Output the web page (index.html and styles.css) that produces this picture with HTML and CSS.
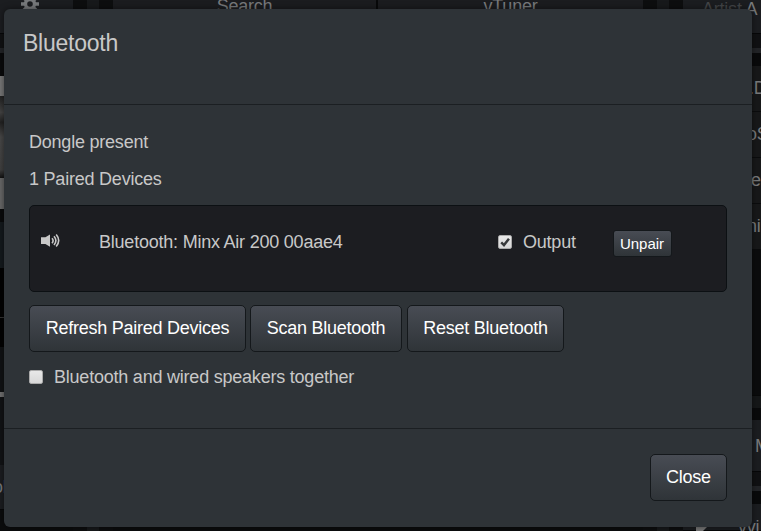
FILE: index.html
```
<!DOCTYPE html>
<html lang="en">

<head>
    <meta charset="UTF-8">
    <meta name="viewport" content="width=device-width, initial-scale=1.0">
    <title>Bluetooth</title>
    <link rel="stylesheet" href="styles.css">
</head>

<body>
    <div class="page">
        <div class="col side">
            <div class="card settings">
                <svg class="gear" viewBox="0 0 18 18">
                    <circle cx="9" cy="9" r="4.5" fill="none" stroke="#77797b" stroke-width="3.4"/>
                    <path d="M9 0v4M9 14v4M0 9h4M14 9h4M2.6 2.6l2.8 2.8M12.6 12.6l2.8 2.8M2.6 15.4l2.8-2.8M12.6 5.4l2.8-2.8" stroke="#77797b" stroke-width="3.4"/>
                </svg>
            </div>
            <div class="edge"></div>
            <div class="space"></div>
            <div class="art-top"></div>
            <div class="art"></div>
            <div class="art-bottom"></div>
            <div class="space"></div>
            <div class="panel"></div>
            <div class="empty"></div>
            <div class="lines"></div>
            <div class="slider"></div>
            <div class="lower"></div>
            <div class="card label">ol</div>
        </div>
        <div class="gutter"></div>
        <div class="col main">
            <div class="tabs">
                <div class="tab">Search</div>
                <div class="tab">vTuner</div>
            </div>
            <div class="fill"></div>
        </div>
        <div class="gutter"></div>
        <div class="col queue">
            <div class="card artist"><span>Artist</span> A</div>
            <div class="edge"></div>
            <div class="space"></div>
            <ul class="list">
                <li>.D</li>
                <li>oS</li>
                <li>e</li>
                <li>ni</li>
            </ul>
            <div class="fill"></div>
            <div class="row-end"></div>
            <div class="card track">M</div>
            <div class="edge"></div>
            <div class="space"></div>
            <div class="card last"><i></i>vvi</div>
        </div>
    </div>

    <div class="modal">
        <div class="modal-header">
            <h3>Bluetooth</h3>
        </div>
        <div class="modal-body">
            <p>Dongle present</p>
            <p>1 Paired Devices</p>
            <div class="well">
                <svg class="speaker" viewBox="0 0 19 14">
                    <path d="M0 3.2h4.4L9 0.4v12.4L4.4 10H0z" fill="#c8c8c8"/>
                    <path d="M11 4.2q2.2 2.5 0 5M13 2.2q3.8 4.4 0 8.8M15.2 0.6q5 6 0 12" fill="none" stroke="#c8c8c8" stroke-width="1.6"/>
                </svg>
                <span class="device">Bluetooth: Minx Air 200 00aae4</span>
                <label class="output">
                    <span class="check">
                        <svg viewBox="0 0 14 14"><path d="M2.6 7.4l3.2 3.2L11.6 3.2" fill="none" stroke="#37393b" stroke-width="2.8"/></svg>
                    </span>
                    Output
                </label>
                <button class="btn btn-small">Unpair</button>
            </div>
            <div class="buttons">
                <button class="btn refresh">Refresh Paired Devices</button>
                <button class="btn scan">Scan Bluetooth</button>
                <button class="btn reset">Reset Bluetooth</button>
            </div>
            <label class="together"><span class="check"></span>Bluetooth and wired speakers together</label>
        </div>
        <div class="modal-footer">
            <button class="btn close">Close</button>
        </div>
    </div>
</body>

</html>
```
FILE: styles.css
```
* {
    box-sizing: border-box;
}

body,
h3,
p,
ul,
li {
    margin: 0;
    padding: 0;
    list-style: none;
}

body {
    height: 531px;
    overflow: hidden;
    background: #0b0c0d;
    color: #c8c8c8;
    font-family: "Liberation Sans", Arial, sans-serif;
    font-size: 18px;
    line-height: 25px;
    letter-spacing: -0.22px;
}

/* page behind the dialog */
.page {
    display: flex;
    height: 531px;
    color: #77797b;
}

.col {
    display: flex;
    flex-direction: column;
    overflow: hidden;
}

.col > * {
    flex: none;
}

.side {
    width: 73px;
}

.main {
    width: 530px;
}

.queue {
    width: 78px;
}

.gutter {
    width: 40px;
    border: solid #0d0e0f;
    border-width: 0 14px;
    background: #17191b;
}

.card {
    height: 34px;
    background: #1b1d20;
    border-bottom: 1px solid #060708;
}

.gear {
    display: block;
    width: 18px;
    height: 18px;
    margin: -5px 0 0 21px;
}

.edge {
    height: 19px;
    background: #222427;
    border-top: 14px solid #101113;
}

.space {
    height: 13px;
    background: #090a0b;
}

.settings + .edge + .space {
    height: 23px;
}

.art-top {
    height: 20px;
    background: #777;
}

.art {
    height: 82px;
    background: linear-gradient(#222, #444 20%, #222 32%, #484848 50%, #404040 90%, #111);
}

.art-bottom {
    height: 31px;
    background: #686868;
}

.panel {
    height: 46px;
    background: #14191d;
}

.empty {
    height: 50px;
    background: #020202;
    border-bottom: 1px solid #333;
}

.lines {
    height: 74px;
    background: #020202;
    border-bottom: 45px solid #101214;
}

.slider {
    height: 5px;
    background: #707070;
}

.lower {
    height: 68px;
    background: #111315;
}

.label {
    height: 45px;
    line-height: 44px;
    text-indent: -7px;
}

.tabs {
    display: flex;
    height: 34px;
    background: #1b1c1f;
}

.tab {
    width: 266px;
    border-right: 2px solid #08090a;
    line-height: 12px;
    text-align: center;
}

.tab + .tab {
    border-right: 0;
}

.fill {
    flex: 1;
    background: #0b0c0d;
}

.artist {
    padding-left: 19px;
    line-height: 18px;
    white-space: nowrap;
}

.artist span {
    color: #424446;
}

.list li {
    height: 46px;
    padding-left: 66px;
    border-bottom: 1px solid #0b0c0d;
    background: #171819;
    line-height: 45px;
}

.list li:nth-child(2),
.list li:nth-child(4) {
    padding-left: 64px;
}

.list li:nth-child(3) {
    padding-left: 68px;
}

.row-end {
    height: 25px;
    background: #151718;
    border-top: 1px solid #080909;
    border-bottom: 12px solid #090a0b;
}

.track {
    height: 52px;
    padding-left: 72px;
    line-height: 53px;
}

.last {
    display: flex;
    height: 27px;
    padding-left: 13px;
    line-height: 46px;
}

.last i {
    margin: 22px 30px 0 0;
    border-left: 12px solid #777;
    border-bottom: 12px solid transparent;
}

/* dialog */
.modal {
    position: absolute;
    left: 4px;
    top: 9px;
    width: 748px;
    height: 518px;
    border-radius: 6px;
    background: #2e3337;
    box-shadow: 0 0 6px rgba(0, 0, 0, 0.5);
}

.modal-header {
    height: 96px;
    padding: 19px;
    border-bottom: 1px solid #1b1f22;
}

.modal-header h3 {
    font-size: 23px;
    font-weight: normal;
    line-height: 30px;
    letter-spacing: -0.25px;
}

.modal-body {
    height: 323px;
    padding: 25px;
}

.modal-body p {
    height: 37px;
}

.well {
    display: flex;
    height: 87px;
    margin: 1px 0 13px;
    padding: 24px 11px;
    border: 1px solid #0c1013;
    border-radius: 5px;
    background: #1c1d21;
}

.speaker {
    width: 19px;
    height: 14px;
    margin: 4px 39px 0 0;
}

.device {
    width: 399px;
}

.output {
    display: flex;
    width: 115px;
}

.check {
    width: 14px;
    height: 14px;
    margin: 5px 11px 0 0;
    border: 1px solid #aaa;
    border-radius: 2px;
    background: linear-gradient(#e8e8e8, #d8d8d8);
}

.check svg {
    display: block;
    width: 12px;
    height: 12px;
}

.btn {
    height: 47px;
    padding: 0;
    border: 1px solid #14181b;
    border-radius: 5px;
    background: linear-gradient(#484c54, #2f3438);
    color: #fff;
    font: 18px "Liberation Sans", Arial, sans-serif;
    letter-spacing: -0.25px;
}

.btn-small {
    width: 59px;
    height: 27px;
    padding-right: 1px;
    border-radius: 3px;
    font-size: 15px;
    letter-spacing: 0;
}

.buttons {
    display: flex;
    gap: 4px;
}

.refresh {
    width: 217px;
}

.scan {
    width: 152px;
}

.reset {
    width: 157px;
    margin-left: 1px;
}

.together {
    display: flex;
    margin-top: 13px;
}

.modal-footer {
    display: flex;
    justify-content: flex-end;
    padding: 25px;
    border-top: 1px solid #1b1f22;
}

.close {
    width: 77px;
}
```
